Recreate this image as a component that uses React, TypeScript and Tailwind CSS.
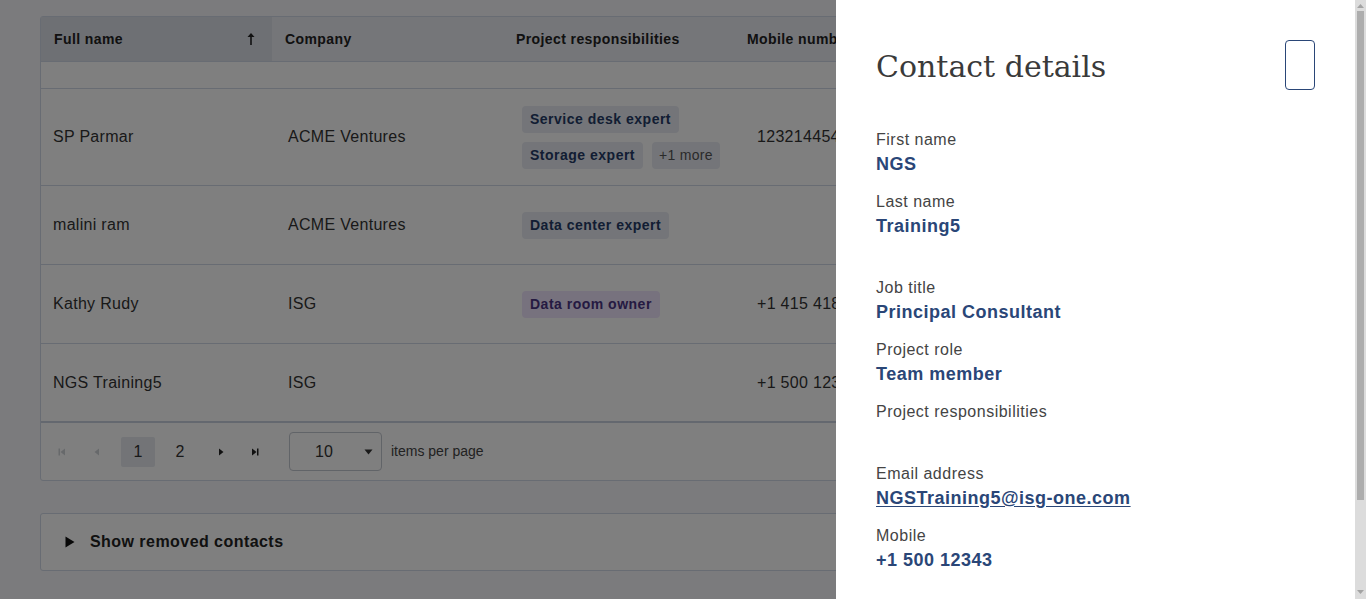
import React from 'react';

const sans = { fontFamily: '"Liberation Sans", Arial, sans-serif' };

type Row = {
  name: string;
  company: string;
  chips: { label: string; tone?: 'purple' | 'more' }[][];
  mobile: string;
  tall?: boolean;
};

const rows: Row[] = [
  {
    name: 'SP Parmar',
    company: 'ACME Ventures',
    chips: [[{ label: 'Service desk expert' }], [{ label: 'Storage expert' }, { label: '+1 more', tone: 'more' }]],
    mobile: '123214454',
    tall: true,
  },
  { name: 'malini ram', company: 'ACME Ventures', chips: [[{ label: 'Data center expert' }]], mobile: '' },
  { name: 'Kathy Rudy', company: 'ISG', chips: [[{ label: 'Data room owner', tone: 'purple' }]], mobile: '+1 415 418 5532' },
  { name: 'NGS Training5', company: 'ISG', chips: [], mobile: '+1 500 12343' },
];

function Chip({ label, tone }: { label: string; tone?: 'purple' | 'more' }) {
  if (tone === 'more') {
    return (
      <span className="inline-flex h-[27px] items-center rounded-[4px] bg-[#e8ebf2] px-[7px] text-[14px] tracking-[0.3px] text-[#555]">
        {label}
      </span>
    );
  }
  return (
    <span
      className={
        tone === 'purple'
          ? 'inline-flex h-[27px] items-center rounded-[4px] bg-[#efe4fc] px-[8px] text-[14px] font-bold tracking-[0.5px] text-[#4a3584]'
          : 'inline-flex h-[27px] items-center rounded-[4px] bg-[#e8ebf2] px-[8px] text-[14px] font-bold tracking-[0.5px] text-[#243a66]'
      }
    >
      {label}
    </span>
  );
}

function PagerIcon({ kind, disabled }: { kind: 'first' | 'prev' | 'next' | 'last'; disabled?: boolean }) {
  const fill = disabled ? '#cfd2d6' : '#222';
  return (
    <svg width="10" height="10" viewBox="0 0 10 10">
      {kind === 'first' && (
        <>
          <rect x="1.5" y="1.5" width="1.5" height="7" fill={fill} />
          <path d="M8 1.5 L3.5 5 L8 8.5 Z" fill={fill} />
        </>
      )}
      {kind === 'prev' && <path d="M7 1.5 L2.5 5 L7 8.5 Z" fill={fill} />}
      {kind === 'next' && <path d="M3 1.5 L7.5 5 L3 8.5 Z" fill={fill} />}
      {kind === 'last' && (
        <>
          <path d="M2 1.5 L6.5 5 L2 8.5 Z" fill={fill} />
          <rect x="7" y="1.5" width="1.5" height="7" fill={fill} />
        </>
      )}
    </svg>
  );
}

function Field({ label, value, link }: { label: string; value?: string; link?: boolean }) {
  return (
    <div className="mb-[13px]">
      <div className="h-[24px] text-[16px] leading-[24px] tracking-[0.5px] text-[#444]">{label}</div>
      <div
        className={
          link
            ? 'h-[25px] text-[18px] font-bold leading-[25px] tracking-[0.5px] text-[#2a4677] underline underline-offset-2'
            : 'h-[25px] text-[18px] font-bold leading-[25px] tracking-[0.5px] text-[#2a4677]'
        }
      >
        {value}
      </div>
    </div>
  );
}

export default function App() {
  return (
    <div className="relative h-[599px] w-full overflow-hidden bg-[#f6f6fa]" style={sans}>
      {/* page behind the drawer */}
      <div className="px-[40px] pt-[16px]">
        <div className="rounded-[3px] border border-[#d0d8e6] bg-white text-[#333]">
          {/* header */}
          <div className="flex h-[45px] border-b border-[#d0d8e6] bg-[#eaecf2] text-[14px] font-bold tracking-[0.4px] text-[#222]">
            <div className="flex w-[231px] items-center justify-between bg-[#dce0e8] pl-[13px] pr-[16px]">
              <span>Full name</span>
              <svg width="10" height="14" viewBox="0 0 10 14">
                <path d="M5 1 L1.5 5 H4.2 V13 H5.8 V5 H8.5 Z" fill="#222" />
              </svg>
            </div>
            <div className="flex w-[232px] items-center pl-[13px]">Company</div>
            <div className="flex w-[231px] items-center pl-[12px]">Project responsibilities</div>
            <div className="flex w-[232px] items-center pl-[12px]">Mobile number</div>
            <div className="flex-1" />
          </div>
          {/* filter row */}
          <div className="h-[27px] border-b border-[#d0d8e6]" />
          {rows.map((r, i) => (
            <div
              key={r.name}
              className={
                (r.tall ? 'h-[97px] ' : 'h-[79px] ') +
                (i === rows.length - 1 ? 'border-b-2 border-[#c8d0de] ' : 'border-b border-[#d0d8e6] ') +
                'flex items-center text-[16px] tracking-[0.3px] text-[#333]'
              }
            >
              <div className="w-[235px] pl-[12px]">{r.name}</div>
              <div className="w-[235px] pl-[12px]">{r.company}</div>
              <div className="flex w-[234px] flex-col gap-[9px] pl-[11px]">
                {r.chips.map((line, j) => (
                  <div key={j} className="flex gap-[9px]">
                    {line.map((c) => (
                      <Chip key={c.label} label={c.label} tone={c.tone} />
                    ))}
                  </div>
                ))}
              </div>
              <div className="w-[235px] pl-[12px]">{r.mobile}</div>
              <div className="flex-1" />
            </div>
          ))}
          {/* pager */}
          <div className="flex h-[57px] items-center pl-[15px] text-[16px] text-[#333]">
            <div className="flex h-[30px] w-[12px] items-center justify-center">
              <PagerIcon kind="first" disabled />
            </div>
            <div className="ml-[23px] flex h-[30px] w-[12px] items-center justify-center">
              <PagerIcon kind="prev" disabled />
            </div>
            <div className="ml-[18px] flex h-[30px] w-[34px] items-center justify-center rounded-[2px] bg-[#e6e9ef]">1</div>
            <div className="ml-[8px] flex h-[30px] w-[34px] items-center justify-center">2</div>
            <div className="ml-[13px] flex h-[30px] w-[22px] items-center justify-center">
              <PagerIcon kind="next" />
            </div>
            <div className="ml-[12px] flex h-[30px] w-[22px] items-center justify-center">
              <PagerIcon kind="last" />
            </div>
            <div className="ml-[23px] flex h-[39px] w-[93px] items-center justify-between rounded-[4px] border border-[#c3c8d0] pl-[25px] pr-[8px]">
              <span>10</span>
              <svg width="9" height="6" viewBox="0 0 9 6">
                <path d="M0.5 0.5 H8.5 L4.5 5.5 Z" fill="#333" />
              </svg>
            </div>
            <span className="ml-[9px] text-[14px] text-[#444]">items per page</span>
          </div>
        </div>

        <div className="mt-[32px] flex h-[58px] items-center rounded-[3px] border border-[#d0d8e6] bg-white pl-[24px]">
          <svg width="10" height="12" viewBox="0 0 10 12">
            <path d="M0.5 0.5 L9.5 6 L0.5 11.5 Z" fill="#111" />
          </svg>
          <span className="ml-[15px] text-[16px] font-bold tracking-[0.45px] text-[#222]">Show removed contacts</span>
        </div>
      </div>

      {/* dim overlay */}
      <div className="absolute inset-0 bg-black/50" />

      {/* contact drawer */}
      <div className="absolute bottom-0 right-0 top-0 flex w-[530px]">
        <div className="flex-1 bg-white px-[40px] pt-[40px]">
          <div className="mb-[38px] flex h-[50px] items-center justify-between">
            <h1
              className="pt-[4px] text-[30px] leading-[40px] text-[#3a3a3a]"
              style={{ fontFamily: '"DejaVu Serif", "Liberation Serif", serif' }}
            >
              Contact details
            </h1>
            <button className="h-[50px] w-[30px] rounded-[4px] border border-[#2a4677] bg-white" />
          </div>
          <Field label="First name" value="NGS" />
          <Field label="Last name" value="Training5" />
          <div className="h-[24px]" />
          <Field label="Job title" value="Principal Consultant" />
          <Field label="Project role" value="Team member" />
          <Field label="Project responsibilities" />
          <Field label="Email address" value="NGSTraining5@isg-one.com" link />
          <Field label="Mobile" value="+1 500 12343" />
        </div>
        {/* scrollbar */}
        <div className="flex w-[11px] flex-col items-center bg-[#dcdcdc]">
          <svg width="7" height="4" viewBox="0 0 7 4" className="mt-[4px]">
            <path d="M0 4 L3.5 0 L7 4 Z" fill="#a3a3a3" />
          </svg>
          <div className="mt-[3px] h-[489px] w-[7px] bg-[#adadad]" />
          <div className="flex-1" />
          <svg width="7" height="4" viewBox="0 0 7 4" className="mb-[5px]">
            <path d="M0 0 L3.5 4 L7 0 Z" fill="#a3a3a3" />
          </svg>
        </div>
      </div>
    </div>
  );
}
